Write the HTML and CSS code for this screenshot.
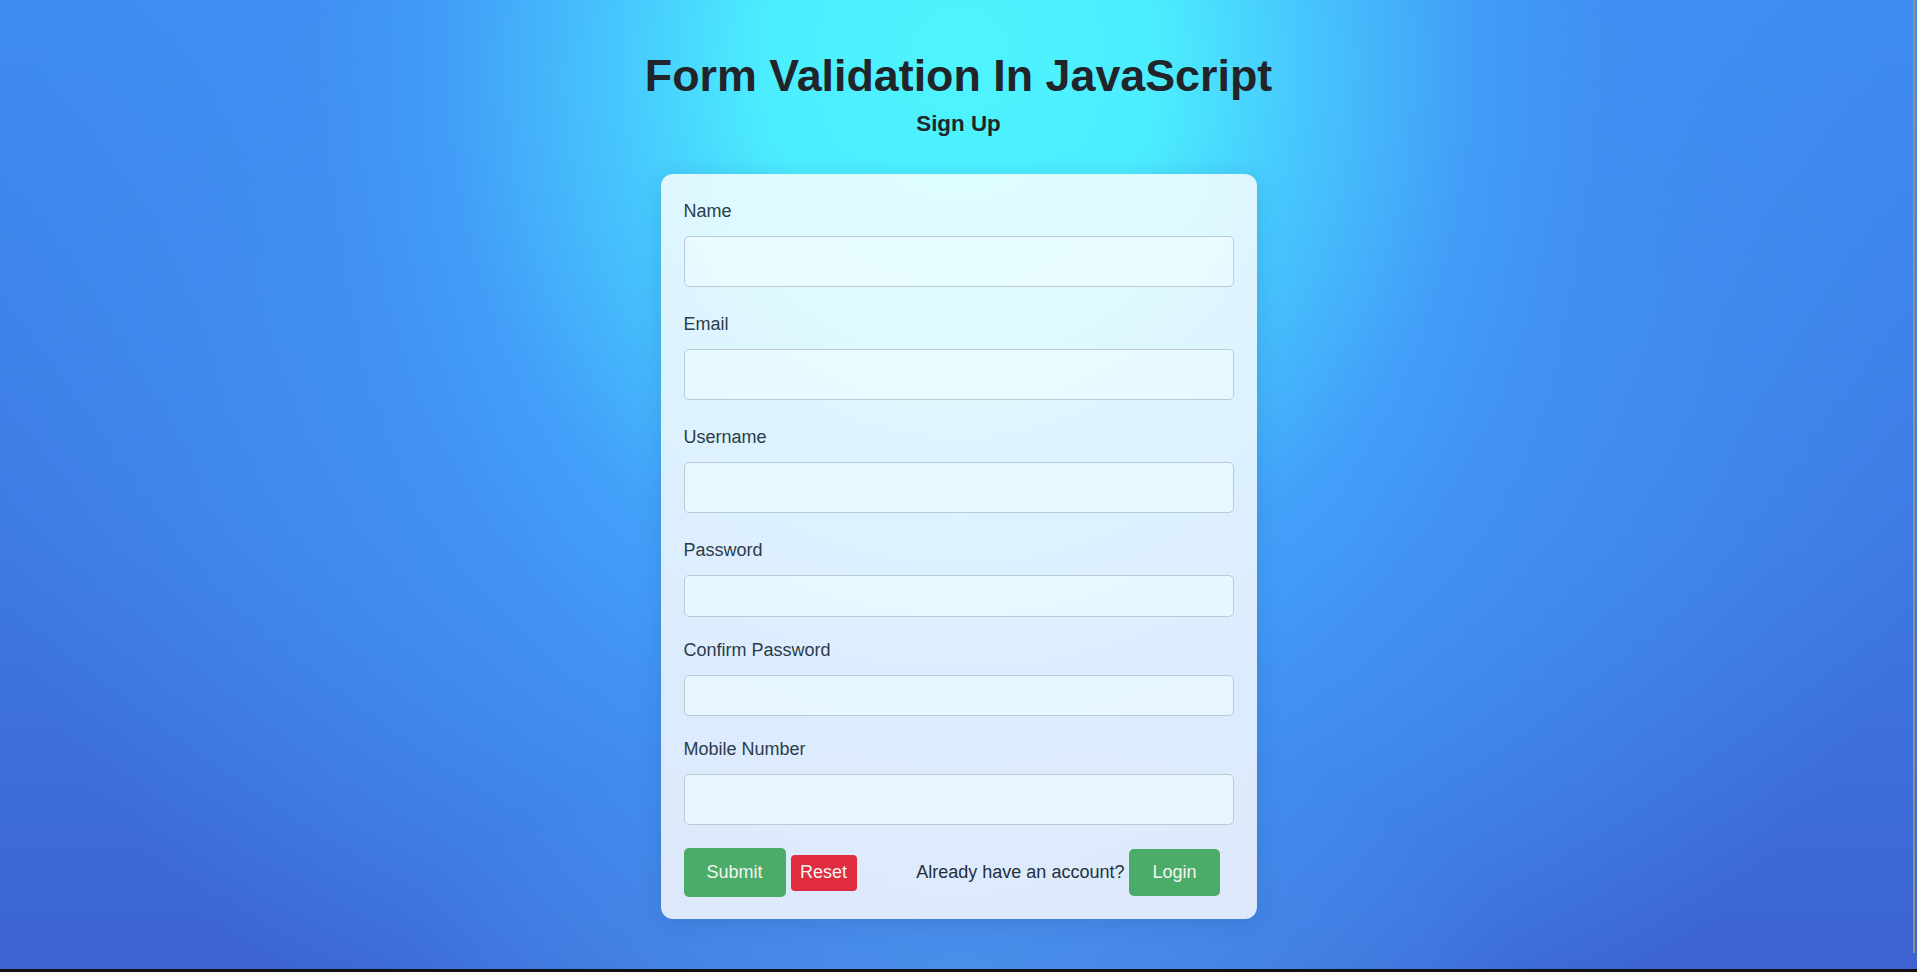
FILE: index.html
```html
<!DOCTYPE html>
<html lang="en">
<head>
<meta charset="utf-8">
<title>Form Validation In JavaScript</title>
<link rel="stylesheet" href="styles.css">
</head>
<body>
  <main class="page">
    <header class="header">
      <h1 class="title">Form Validation In JavaScript</h1>
      <h2 class="subtitle">Sign Up</h2>
    </header>
    <form class="card" onsubmit="return false">
      <div class="field">
        <label class="label" for="name">Name</label>
        <input class="input" id="name" type="text">
      </div>
      <div class="field">
        <label class="label" for="email">Email</label>
        <input class="input" id="email" type="email">
      </div>
      <div class="field">
        <label class="label" for="username">Username</label>
        <input class="input" id="username" type="text">
      </div>
      <div class="field field-pw">
        <label class="label" for="password">Password</label>
        <input class="input input-pw" id="password" type="password">
      </div>
      <div class="field field-pw">
        <label class="label" for="cpassword">Confirm Password</label>
        <input class="input input-pw input-cpw" id="cpassword" type="password">
      </div>
      <div class="field field-last">
        <label class="label" for="mobile">Mobile Number</label>
        <input class="input" id="mobile" type="text">
      </div>
      <div class="actions">
        <div class="actions-left">
          <button class="btn btn-submit" type="submit">Submit</button>
          <button class="btn btn-reset" type="reset">Reset</button>
        </div>
        <div class="actions-right">
          <span class="account-text">Already have an account?</span>
          <button class="btn btn-login" type="button">Login</button>
        </div>
      </div>
    </form>
  </main>
  <div class="edge-right"></div>
  <div class="edge-bottom"></div>
</body>
</html>
```

FILE: styles.css
```css
* {
  box-sizing: border-box;
}

html, body {
  margin: 0;
  padding: 0;
  height: 100%;
  overflow: hidden;
}

body {
  font-family: "Liberation Sans", Arial, sans-serif;
  background-color: #3f78e0;
  background-image:
    radial-gradient(ellipse 700px 760px at 960px 60px, rgba(78, 244, 255, 1) 0%, rgba(76, 240, 255, 0.97) 28%, rgba(72, 212, 255, 0.76) 50%, rgba(67, 178, 255, 0.32) 74%, rgba(66, 165, 255, 0) 92%),
    radial-gradient(ellipse 560px 260px at 960px 980px, rgba(78, 148, 238, 0.75) 0%, rgba(78, 148, 238, 0) 100%),
    radial-gradient(ellipse 1000px 860px at 960px 360px, #45a6ff 0%, #4295f5 45%, rgba(64, 118, 228, 0) 100%),
    linear-gradient(180deg, #3e8cf1 0%, #3e7ae3 55%, #3c63d0 100%);
}

.page {
  display: flex;
  flex-direction: column;
  align-items: center;
  padding-top: 50px;
}

.header {
  text-align: center;
}

.title {
  margin: 0;
  font-size: 44.8px;
  font-weight: 700;
  color: #212529;
  line-height: normal;
}

.subtitle {
  margin: 10px 0 0;
  font-size: 22.4px;
  font-weight: 700;
  color: #212529;
  line-height: normal;
}

.card {
  margin-top: 37px;
  width: 596px;
  padding: 24px 23px 22px;
  background: rgba(255, 255, 255, 0.82);
  border-radius: 12px;
  box-shadow: 0 4px 22px rgba(20, 60, 120, 0.18);
}

.field {
  display: flex;
  flex-direction: column;
  margin-bottom: 24px;
}

.field-pw {
  margin-bottom: 20px;
}

.label {
  font-size: 18px;
  line-height: 27px;
  color: #2b3c4a;
  margin-bottom: 11px;
}

.input {
  height: 51px;
  width: 100%;
  border: 1px solid #bacbd5;
  border-radius: 5px;
  background: rgba(238, 253, 255, 0.6);
  font-family: inherit;
  font-size: 16px;
  padding: 0 12px;
  outline: none;
}

.input-pw {
  height: 42px;
}

.input-cpw {
  height: 41px;
}

.actions {
  display: flex;
  justify-content: space-between;
  align-items: center;
  margin-top: -1px;
}

.actions-left,
.actions-right {
  display: flex;
  align-items: center;
  gap: 5px;
}

.actions-right {
  margin-right: 14px;
}

.account-text {
  font-size: 18px;
  color: #262f3c;
}

.btn {
  border: none;
  font-family: inherit;
  font-size: 18px;
  line-height: 21px;
  color: #f3f6f3;
  cursor: pointer;
}

.btn-submit {
  background: #4bab69;
  padding: 14px 23px;
  border-radius: 5px;
}

.btn-reset {
  background: #e02c3e;
  padding: 7.5px 9.5px;
  border-radius: 4px;
}

.btn-login {
  background: #4bab69;
  padding: 13px 23px;
  border-radius: 5px;
}

.edge-right {
  position: fixed;
  top: 0;
  right: 2px;
  width: 2px;
  height: 953px;
  background: #8f8f8f;
}

.edge-bottom {
  position: fixed;
  left: 0;
  right: 0;
  bottom: 0;
  height: 3px;
  background: #111;
}
```
